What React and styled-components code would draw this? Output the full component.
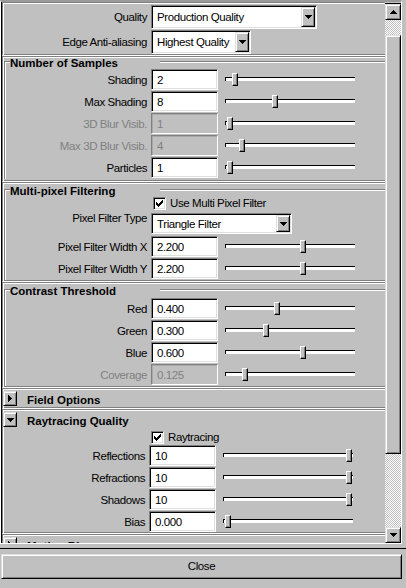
import React from 'react';
import styled, { createGlobalStyle, css } from 'styled-components';

const UI_FONT = '"Liberation Sans", Arial, sans-serif';
const BOLD_FONT = '"Liberation Sans", Arial, sans-serif';

const GlobalStyle = createGlobalStyle`
  html, body {
    margin: 0;
    padding: 0;
    background: #c0c0c0;
  }
`;

const sunken = css`
  border: 1px solid;
  border-color: #808080 #fff #fff #808080;
  box-shadow: inset 1px 1px 0 #000, inset -1px -1px 0 #dfdfdf;
`;

const raised = css`
  border: 1px solid;
  border-color: #dfdfdf #000 #000 #dfdfdf;
  box-shadow: inset 1px 1px 0 #fff, inset -1px -1px 0 #808080;
`;

const Window = styled.div`
  width: 406px;
  height: 588px;
  overflow: hidden;
  display: flex;
  flex-direction: column;
  background: #c0c0c0;
  font-family: ${UI_FONT};
  font-size: 11.5px;
  letter-spacing: -0.4px;
  color: #000;
`;

const ScrollFrame = styled.div`
  box-sizing: border-box;
  flex: none;
  width: 402px;
  height: 544px;
  display: flex;
  border-top: 2px solid #9a9a9a;
  border-left: 1px solid #fff;
  border-right: 1px solid #fff;
  border-bottom: 1px solid #fff;
`;

const Inner = styled.div`
  flex: 1;
  min-height: 0;
  display: flex;
  border-left: 1px solid #000;
`;

const Viewport = styled.div`
  flex: 1;
  min-width: 0;
  overflow: hidden;
  display: flex;
  flex-direction: column;
`;

const Frame = styled.div`
  flex: none;
  border-top: 1px solid #808080;
  border-left: 1px solid #808080;
  border-bottom: 1px solid #fff;
  box-shadow: inset 1px 1px 0 #fff, inset 0 -1px 0 #808080;
  padding: ${p => p.$top}px 0 ${p => p.$bottom}px 1px;
`;

const Rows = styled.div`
  display: flex;
  flex-direction: column;
  gap: ${p => p.$gap || 0}px;
`;

const GroupTitle = styled.div`
  display: flex;
  align-items: flex-start;
  height: ${p => p.$h}px;
`;

const TitleCorner = styled.div`
  box-sizing: border-box;
  width: 6px;
  align-self: stretch;
  margin-top: 3px;
  border-top: 1px solid #808080;
  border-left: 1px solid #808080;
  box-shadow: inset 1px 1px 0 #fff;
`;

const GroupLabel = styled.div`
  width: 150px;
  font-family: ${BOLD_FONT};
  font-weight: bold;
  font-size: 11.5px;
  letter-spacing: 0;
  line-height: 11px;
  white-space: nowrap;
`;

const TitleRule = styled.div`
  flex: 1;
  margin-top: 3px;
  border-top: 1px solid #808080;
  border-bottom: 1px solid #fff;
`;

const GroupBody = styled.div`
  border-left: 1px solid #808080;
  box-shadow: inset 1px 0 0 #fff;
  padding-left: 1px;
`;

const Row = styled.div`
  display: flex;
  align-items: ${p => p.$align || 'center'};
  height: ${p => p.$h || 22}px;
`;

const Label = styled.div`
  flex: none;
  box-sizing: border-box;
  width: ${p => p.$w}px;
  margin-right: 4px;
  padding-bottom: 1px;
  text-align: right;
  white-space: nowrap;
  color: ${p => (p.$off ? '#808080' : '#000')};
`;

const Field = styled.div`
  ${sunken}
  box-sizing: border-box;
  flex: none;
  width: 67px;
  height: 21px;
  margin-bottom: 1px;
  padding-left: 5px;
  display: flex;
  align-items: center;
  background: ${p => (p.$off ? '#c0c0c0' : '#fff')};
  color: ${p => (p.$off ? '#808080' : '#000')};
  ${p => p.$off && css`box-shadow: inset 1px 1px 0 #a8a8a8;`}
`;

const Select = styled.div`
  ${sunken}
  box-sizing: border-box;
  flex: none;
  width: ${p => p.$w}px;
  height: ${p => p.$h}px;
  margin-top: ${p => p.$mt || 0}px;
  padding: 1px;
  display: flex;
  background: #fff;
`;

const SelectValue = styled.div`
  flex: 1;
  display: flex;
  align-items: center;
  padding-left: 4px;
  white-space: nowrap;
  overflow: hidden;
`;

const SelectArrow = styled.div`
  ${raised}
  box-sizing: border-box;
  flex: none;
  width: 14px;
  background: #c0c0c0;
  display: flex;
  align-items: center;
  justify-content: center;
`;

const Slider = styled.div`
  position: relative;
  flex: none;
  width: 130px;
  height: 21px;
  margin: 0 0 1px 7px;
  display: flex;
  align-items: center;

  &::before {
    content: '';
    position: absolute;
    left: 0;
    right: 0;
    top: 8px;
    height: 3px;
    border-top: 1px solid #000;
    border-left: 1px solid #000;
    background: #fff;
  }
`;

const Thumb = styled.div`
  ${raised}
  position: relative;
  box-sizing: border-box;
  width: 6px;
  height: 13px;
  margin-left: ${p => p.$pos}px;
  background: #c0c0c0;
  box-shadow: inset -1px -1px 0 #808080;
  border-color: #fff #000 #000 #fff;
`;

const CheckBox = styled.div`
  ${sunken}
  box-sizing: border-box;
  flex: none;
  width: 13px;
  height: 13px;
  margin: ${p => p.$mt || 0}px 4px 0 2px;
  background: #fff;
  display: flex;
  align-items: center;
  justify-content: center;
`;

const CheckText = styled.div`
  white-space: nowrap;
  margin-top: ${p => p.$mt || 0}px;
  line-height: 13px;
`;

const FrameHeader = styled.div`
  display: flex;
  align-items: center;
  height: 17px;
`;

const ExpandButton = styled.div`
  ${raised}
  box-sizing: border-box;
  flex: none;
  width: 14px;
  height: 15px;
  margin-left: -1px;
  background: #c0c0c0;
  display: flex;
  align-items: center;
  justify-content: center;
`;

const FrameTitle = styled.div`
  margin-left: 10px;
  padding-top: 2px;
  font-family: ${BOLD_FONT};
  font-weight: bold;
  font-size: 11.5px;
  letter-spacing: 0;
  white-space: nowrap;
`;

const ScrollBar = styled.div`
  flex: none;
  width: 16px;
  margin-top: 1px;
  border-top: 1px solid #000;
  display: flex;
  flex-direction: column;
`;

const ScrollButton = styled.div`
  ${raised}
  box-sizing: border-box;
  flex: none;
  height: 16px;
  background: #c0c0c0;
  display: flex;
  align-items: center;
  justify-content: center;
`;

const Track = styled.div`
  flex: 1;
  min-height: 0;
  display: flex;
  flex-direction: column;
  background: repeating-conic-gradient(#c0c0c0 0% 25%, #fff 0% 50%) 0 0 / 2px 2px;
`;

const ScrollThumb = styled.div`
  ${raised}
  box-sizing: border-box;
  flex: none;
  margin-top: 15px;
  height: 419px;
  background: #c0c0c0;
`;

const Divider = styled.div`
  flex: none;
  height: 1px;
  margin-top: 4px;
  background: #000;
`;

const CloseButton = styled.button`
  ${raised}
  box-sizing: border-box;
  flex: none;
  width: 401px;
  height: 25px;
  margin: 5px 0 0 1px;
  padding: 0 0 1px;
  background: #c0c0c0;
  font-family: ${UI_FONT};
  font-size: 11.5px;
  letter-spacing: -0.4px;
  color: #000;
  display: flex;
  align-items: center;
  justify-content: center;
`;

const TriDown = () => (
  <svg width="7" height="4" viewBox="0 0 7 4" shapeRendering="crispEdges">
    <path d="M0 0h7v1H0zM1 1h5v1H1zM2 2h3v1H2zM3 3h1v1H3z" fill="#000" />
  </svg>
);

const TriUp = () => (
  <svg width="7" height="4" viewBox="0 0 7 4" shapeRendering="crispEdges">
    <path d="M3 0h1v1H3zM2 1h3v1H2zM1 2h5v1H1zM0 3h7v1H0z" fill="#000" />
  </svg>
);

const TriRight = () => (
  <svg width="4" height="7" viewBox="0 0 4 7" shapeRendering="crispEdges">
    <path d="M0 0h1v7H0zM1 1h1v5H1zM2 2h1v3H2zM3 3h1v1H3z" fill="#000" />
  </svg>
);

const Check = () => (
  <svg width="7" height="7" viewBox="0 0 7 7" shapeRendering="crispEdges">
    <path
      d="M6 0h1v1H6zM5 1h2v1H5zM0 2h1v1H0zM4 2h3v1H4zM0 3h2v1H0zM3 3h3v1H3zM0 4h5v1H0zM1 5h3v1H1zM2 6h1v1H2z"
      fill="#000"
    />
  </svg>
);

const SliderRow = ({ label, value, pos, off, labelWidth }) => (
  <Row>
    <Label $w={labelWidth} $off={off}>{label}</Label>
    <Field $off={off}>{value}</Field>
    <Slider>
      <Thumb $pos={pos} />
    </Slider>
  </Row>
);

const Group = ({ title, titleHeight, children }) => (
  <>
    <GroupTitle $h={titleHeight}>
      <TitleCorner />
      <GroupLabel>{title}</GroupLabel>
      <TitleRule />
    </GroupTitle>
    <GroupBody>{children}</GroupBody>
  </>
);

const samples = [
  { label: 'Shading', value: '2', pos: 7 },
  { label: 'Max Shading', value: '8', pos: 47 },
  { label: '3D Blur Visib.', value: '1', pos: 2, off: true },
  { label: 'Max 3D Blur Visib.', value: '4', pos: 14, off: true },
  { label: 'Particles', value: '1', pos: 2 },
];

const filterWidths = [
  { label: 'Pixel Filter Width X', value: '2.200', pos: 75 },
  { label: 'Pixel Filter Width Y', value: '2.200', pos: 75 },
];

const contrast = [
  { label: 'Red', value: '0.400', pos: 49 },
  { label: 'Green', value: '0.300', pos: 38 },
  { label: 'Blue', value: '0.600', pos: 75 },
  { label: 'Coverage', value: '0.125', pos: 17, off: true },
];

const raytracing = [
  { label: 'Reflections', value: '10', pos: 123 },
  { label: 'Refractions', value: '10', pos: 123 },
  { label: 'Shadows', value: '10', pos: 123 },
  { label: 'Bias', value: '0.000', pos: 2 },
];

export default function App() {
  return (
    <Window>
      <GlobalStyle />
      <ScrollFrame>
        <Inner>
          <Viewport>
            <Frame $top={2} $bottom={1}>
              <Rows $gap={1}>
                <Row $h={24}>
                  <Label $w={143}>Quality</Label>
                  <Select $w={166} $h={24}>
                    <SelectValue>Production Quality</SelectValue>
                    <SelectArrow><TriDown /></SelectArrow>
                  </Select>
                </Row>
                <Row $h={24}>
                  <Label $w={143}>Edge Anti-aliasing</Label>
                  <Select $w={100} $h={24}>
                    <SelectValue>Highest Quality</SelectValue>
                    <SelectArrow><TriDown /></SelectArrow>
                  </Select>
                </Row>
              </Rows>
            </Frame>

            <Frame $top={1} $bottom={2}>
              <Group title="Number of Samples" titleHeight={11}>
                {samples.map(s => (
                  <SliderRow key={s.label} {...s} labelWidth={141} />
                ))}
              </Group>
            </Frame>

            <Frame $top={3} $bottom={1}>
              <Group title="Multi-pixel Filtering" titleHeight={11}>
                <Row $h={15} $align="flex-start">
                  <Label $w={141} />
                  <CheckBox><Check /></CheckBox>
                  <CheckText>Use Multi Pixel Filter</CheckText>
                </Row>
                <Row $h={24} $align="flex-start">
                  <Label $w={141}>Pixel Filter Type</Label>
                  <Select $w={141} $h={21} $mt={1}>
                    <SelectValue>Triangle Filter</SelectValue>
                    <SelectArrow><TriDown /></SelectArrow>
                  </Select>
                </Row>
                {filterWidths.map(s => (
                  <SliderRow key={s.label} {...s} labelWidth={141} />
                ))}
              </Group>
            </Frame>

            <Frame $top={3} $bottom={1}>
              <Group title="Contrast Threshold" titleHeight={12}>
                {contrast.map(s => (
                  <SliderRow key={s.label} {...s} labelWidth={141} />
                ))}
              </Group>
            </Frame>

            <Frame $top={1} $bottom={1}>
              <FrameHeader>
                <ExpandButton><TriRight /></ExpandButton>
                <FrameTitle>Field Options</FrameTitle>
              </FrameHeader>
            </Frame>

            <Frame $top={1} $bottom={0}>
              <FrameHeader>
                <ExpandButton><TriDown /></ExpandButton>
                <FrameTitle>Raytracing Quality</FrameTitle>
              </FrameHeader>
              <Row $h={17} $align="flex-start">
                <Label $w={141} />
                <CheckBox $mt={3}><Check /></CheckBox>
                <CheckText $mt={3}>Raytracing</CheckText>
              </Row>
              {raytracing.map(s => (
                <SliderRow key={s.label} {...s} labelWidth={141} />
              ))}
            </Frame>

            <Frame $top={1} $bottom={1}>
              <FrameHeader>
                <ExpandButton><TriRight /></ExpandButton>
                <FrameTitle>Motion Blur</FrameTitle>
              </FrameHeader>
            </Frame>
          </Viewport>

          <ScrollBar>
            <ScrollButton><TriUp /></ScrollButton>
            <Track>
              <ScrollThumb />
            </Track>
            <ScrollButton><TriDown /></ScrollButton>
          </ScrollBar>
        </Inner>
      </ScrollFrame>
      <Divider />
      <CloseButton type="button">Close</CloseButton>
    </Window>
  );
}
